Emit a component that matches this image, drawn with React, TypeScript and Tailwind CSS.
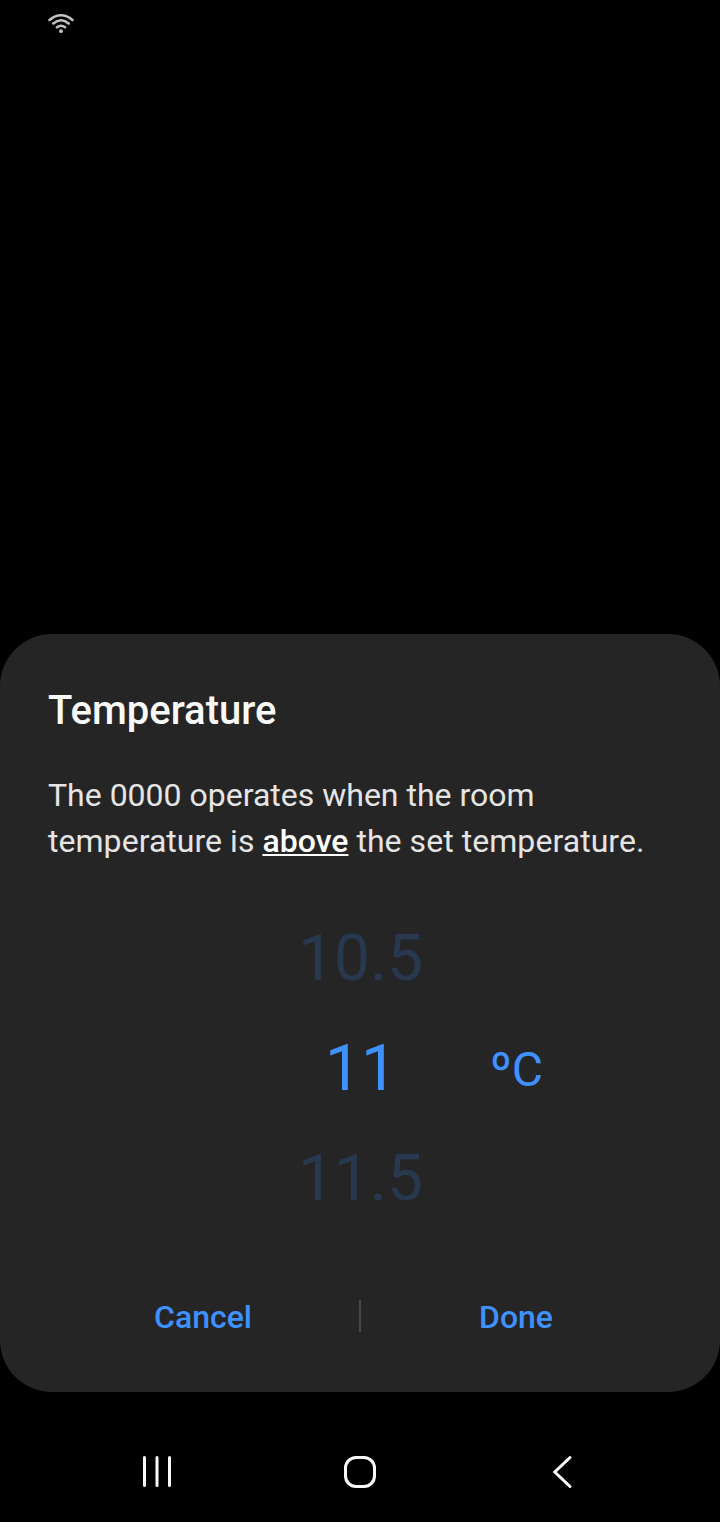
const number = "flex h-[110px] items-center justify-center text-[64px] leading-none";

export default function App() {
  return (
    <div className="flex h-[1522px] w-[720px] flex-col bg-black font-['Roboto',sans-serif] antialiased">
      <header className="h-[634px] pl-12 pt-[13px]">
        <svg width="26" height="21" viewBox="0 0 26 21" fill="none" stroke="#c4c4c4" strokeWidth="2.5" strokeLinecap="round">
          <path d="M1.5 7Q13 -2.5 24.5 7M5.3 10.5Q13 4 20.7 10.5M9 14.2Q13 11.2 17 14.2" />
          <circle cx="13" cy="18.2" r="1.9" fill="#c4c4c4" stroke="none" />
        </svg>
      </header>
      <main className="h-[758px] rounded-[52px] bg-[#252525] px-12 pt-[53px]">
        <h1 className="h-[85px] text-[40px] font-medium leading-[48px] text-[#fafafa]">Temperature</h1>
        <p className="h-[132px] whitespace-nowrap text-[32px] leading-[46px] text-[#e5e5e5]">
          The 0000 operates when the room<br />
          <span className="tracking-[0.04px]">temperature is </span>
          <b className="font-medium text-white underline decoration-2 underline-offset-2">above</b>
          <span className="tracking-[0.05px]"> the set temperature.</span>
        </p>
        <section className="grid h-[330px] grid-cols-[156px_312px_156px]">
          <div />
          <div>
            <div className={`${number} pl-px text-[#28384f]`}>10.5</div>
            <div className={`${number} pl-0.5 text-[#3e91ff]`}>11</div>
            <div className={`${number} pl-px text-[#28384f]`}>11.5</div>
          </div>
          <div className="-ml-[26px] flex items-center pt-0.5 text-[48px] text-[#3e91ff]">ºC</div>
        </section>
        <footer className="mt-[51px] flex h-16 items-center text-[32px] font-medium text-[#3e91ff]">
          <button className="w-[310px]">Cancel</button>
          <span className="ml-px mb-0.5 h-8 w-0.5 bg-[#484848]" />
          <button className="w-[311px] pr-px">Done</button>
        </footer>
      </main>
      <nav className="flex h-[130px] pt-[60px]">
        <svg width="720" height="40" viewBox="0 0 720 40" fill="none" stroke="#fafafa" strokeWidth="3">
          <path strokeLinecap="round" d="M144.5 5.5V33.5M157 5.5V33.5M169.5 5.5V33.5" />
          <rect x="345.5" y="5.5" width="29" height="29" rx="10.5" />
          <path strokeLinecap="round" d="M570 5.5L554.8 20L570 34.5" />
        </svg>
      </nav>
    </div>
  );
}
